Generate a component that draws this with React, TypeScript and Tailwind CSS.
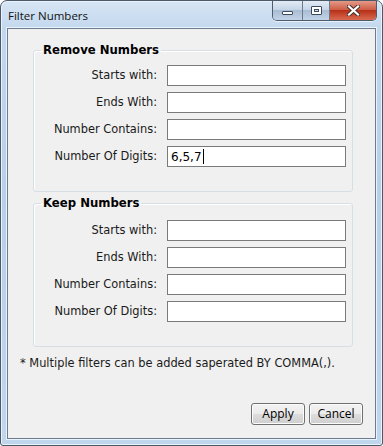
import type { ReactNode } from "react";

type FilterRow = { label: string; value?: string; focused?: boolean };

const REMOVE_ROWS: FilterRow[] = [
  { label: "Starts with:" },
  { label: "Ends With:" },
  { label: "Number Contains:" },
  { label: "Number Of Digits:", value: "6,5,7", focused: true },
];

const KEEP_ROWS: FilterRow[] = [
  { label: "Starts with:" },
  { label: "Ends With:" },
  { label: "Number Contains:" },
  { label: "Number Of Digits:" },
];

const TextBox = ({ value, focused }: { value?: string; focused?: boolean }) => (
  <div className="flex h-[21px] w-[179px] items-center border border-[#7a7a7a] bg-white pl-[3px] text-[12px] leading-none text-black">
    {value}
    {focused ? <span className="ml-[1px] h-[15px] w-px bg-black" /> : null}
  </div>
);

const GroupBox = ({
  title,
  rows,
  topPad,
}: {
  title: string;
  rows: FilterRow[];
  topPad: string;
}) => (
  <fieldset
    className={`mx-[25px] rounded-[3px] border border-[#d5dfe5] pr-[6px] pb-[24px] shadow-[inset_1px_1px_0_#fff] ${topPad}`}
  >
    <legend className="ml-[7px] px-[2px] text-[11.7px] leading-[14px] font-bold text-black">
      {title}
    </legend>
    <div className="flex flex-col gap-[6px]">
      {rows.map((row) => (
        <div className="flex items-center" key={row.label}>
          <span className="w-[124px] pr-[1px] text-right text-[11.4px] text-[#1a1a1a]">
            {row.label}
          </span>
          <span className="ml-[9px]">
            <TextBox focused={row.focused} value={row.value} />
          </span>
        </div>
      ))}
    </div>
  </fieldset>
);

const DialogButton = ({ children }: { children: ReactNode }) => (
  <button
    className="flex h-[22px] w-[54px] items-center justify-center rounded-[3px] border border-[#707070] bg-[linear-gradient(#f2f2f2_0%,#ebebeb_50%,#dddddd_50%,#cfcfcf_100%)] text-[12px] text-black shadow-[inset_0_0_0_1px_#fcfcfc] [font-family:'Open_Sans','Noto_Sans',sans-serif]"
    type="button"
  >
    {children}
  </button>
);

const CaptionButtons = () => (
  <div className="flex h-[20px] overflow-hidden rounded-b-[5px] border border-t-0 border-[#4f5c6c] shadow-[0_1px_0_#e8f1fa]">
    <div className="flex w-[30px] items-center justify-center border-r border-[#6d7a8a] bg-[linear-gradient(#e2ebf5,#c3d3e6_50%,#a9bdd4_50%,#c2d3e7)]">
      <span className="mt-[4px] h-[4px] w-[11px] rounded-[1px] border border-[#3c4a5a] bg-white" />
    </div>
    <div className="flex w-[27px] items-center justify-center border-r border-[#6d7a8a] bg-[linear-gradient(#e2ebf5,#c3d3e6_50%,#a9bdd4_50%,#c2d3e7)]">
      <span className="h-[9px] w-[11px] rounded-[1px] border border-[#3c4a5a] bg-white p-[2px]">
        <span className="block h-full w-full border border-[#3c4a5a] bg-[#d8e2ee]" />
      </span>
    </div>
    <div className="flex w-[46px] items-center justify-center bg-[linear-gradient(#e39a88,#cc5840_50%,#b8321a_50%,#d86a50)]">
      <svg height="11" viewBox="0 0 13 11" width="13">
        <path
          d="M2 1.5 L11 9.5 M11 1.5 L2 9.5"
          stroke="#43302c"
          strokeLinecap="square"
          strokeWidth="4"
        />
        <path
          d="M2 1.5 L11 9.5 M11 1.5 L2 9.5"
          stroke="#ffffff"
          strokeLinecap="square"
          strokeWidth="2.2"
        />
      </svg>
    </div>
  </div>
);

export default function App() {
  return (
    <div className="h-[446px] w-[383px] bg-white [font-family:'DejaVu_Sans',Verdana,sans-serif]">
      <div className="flex h-[446px] w-[383px] flex-col rounded-t-[7px] rounded-b-[3px] border border-[#4a5868] bg-[linear-gradient(180deg,#d6e5f5_0px,#c2d7ed_30px,#b7cfe9_200px,#c0d6ed_446px)] shadow-[inset_0_0_0_1px_#eaf3fb]">
        <div className="flex h-[27px] shrink-0 items-start justify-between pl-[7px]">
          <span className="mt-[6px] text-[11.5px] text-[#111] [font-family:'Open_Sans','Noto_Sans',sans-serif]">
            Filter Numbers
          </span>
          <div className="mr-[5px]">
            <CaptionButtons />
          </div>
        </div>

        <div className="mx-[6px] mb-[6px] flex flex-1 flex-col border border-[#6b7c90] bg-[#f0f0f0] pt-[14px] shadow-[0_0_0_1px_#eaf3fb]">
          <GroupBox rows={REMOVE_ROWS} title="Remove Numbers" topPad="pt-[8px]" />
          <div className="h-[4px]" />
          <GroupBox rows={KEEP_ROWS} title="Keep Numbers" topPad="pt-[10px]" />

          <p className="mt-[8px] ml-[12px] text-[11.4px] text-[#1a1a1a]">
            * Multiple filters can be added saperated BY COMMA(,).
          </p>

          <div className="mt-auto mr-[12px] mb-[13px] flex justify-end gap-[4px]">
            <DialogButton>Apply</DialogButton>
            <DialogButton>Cancel</DialogButton>
          </div>
        </div>
      </div>
    </div>
  );
}
